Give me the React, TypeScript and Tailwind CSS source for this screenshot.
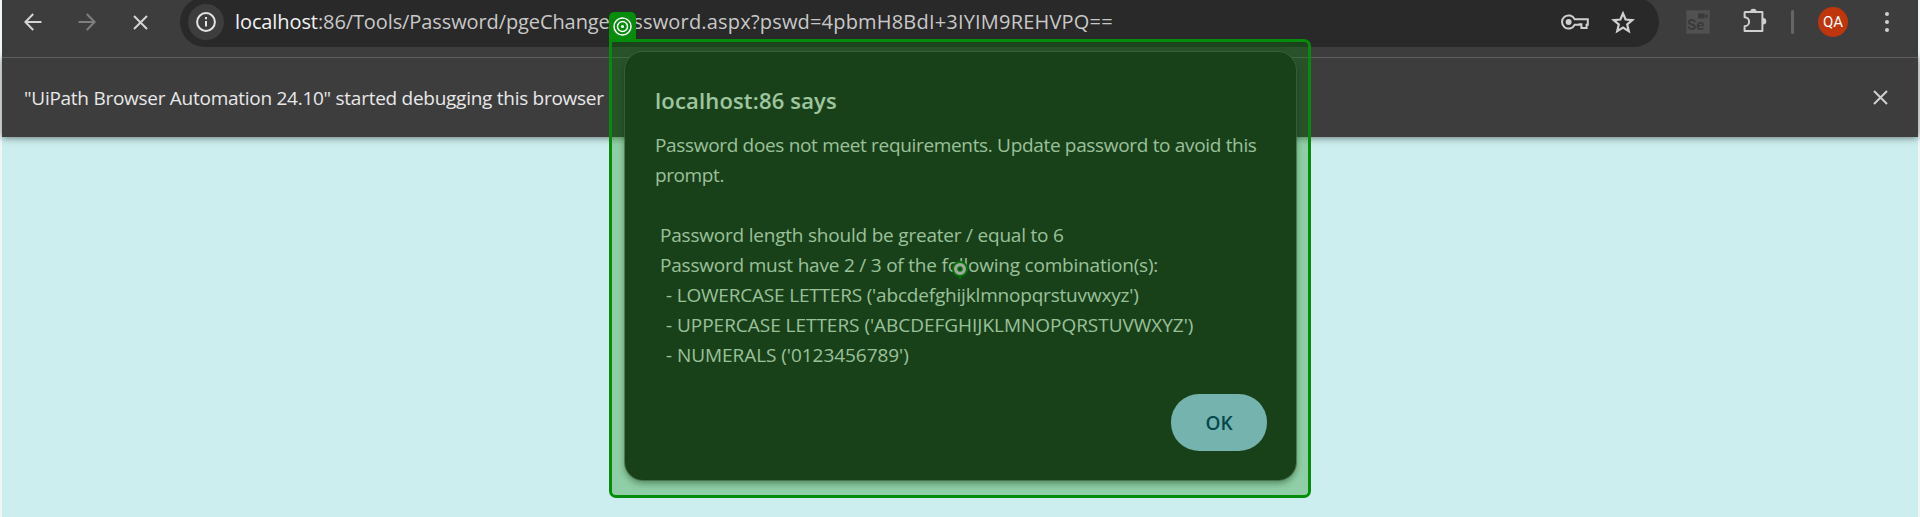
import React from "react";

function BackIcon() {
  return (
    <svg width="18" height="18" viewBox="0 0 18 18" fill="none" stroke="currentColor" strokeWidth="2">
      <path d="M17.5 9H2M9.2 1L1.4 9l7.8 8" />
    </svg>
  );
}

function ForwardIcon() {
  return (
    <svg width="18" height="18" viewBox="0 0 18 18" fill="none" stroke="currentColor" strokeWidth="2">
      <path d="M0.5 9H16M8.8 1l7.8 8-7.8 8" />
    </svg>
  );
}

function CrossIcon() {
  return (
    <svg width="15" height="15" viewBox="0 0 15 15" fill="none" stroke="currentColor" strokeWidth="2">
      <path d="M1 1l13 13M14 1L1 14" />
    </svg>
  );
}

function InfoIcon() {
  return (
    <svg width="20" height="20" viewBox="0 0 20 20" fill="none" stroke="currentColor" strokeWidth="2">
      <circle cx="10" cy="10" r="8.9" />
      <path d="M10 9v5.6M10 5v2.2" />
    </svg>
  );
}

function KeyIcon() {
  return (
    <svg width="28" height="16" viewBox="0 0 28 16" fill="none" stroke="currentColor" strokeWidth="2">
      <path d="M13.6 5.2H26.8v5.6h-1.2V14h-5.2v-3.8h-1.8v.6h-5A6.6 6.6 0 1 1 13.6 5.2z" />
      <circle cx="7.6" cy="8" r="3" fill="currentColor" stroke="none" />
    </svg>
  );
}

function StarIcon() {
  return (
    <svg width="24" height="23" viewBox="0 0 24 23" fill="none" stroke="currentColor" strokeWidth="2.2">
      <path d="M12 2.4l2.6 6.1 6.7.6-5.1 4.4 1.6 6.6L12 16.6l-5.8 3.5 1.6-6.6-5.1-4.4 6.7-.6z" />
    </svg>
  );
}

function PuzzleIcon() {
  return (
    <svg width="25" height="25" viewBox="0 0 25 25">
      <path
        d="M3.2 4H20.4V23H2.6V18.2A3.6 3.6 0 0 0 2.6 9.2V4.6Q2.6 4 3.2 4z"
        fill="none"
        stroke="currentColor"
        strokeWidth="2"
        strokeLinejoin="round"
      />
      <path d="M8.2 4a3.2 3.2 0 0 1 6.4 0zM21 10a3.3 3.3 0 0 1 0 6.6z" fill="currentColor" />
    </svg>
  );
}

function SeleniumBadge() {
  return (
    <div className="relative flex h-6 w-6 items-end bg-[#515151] pl-px ring-1 ring-[#4a4a4a] ring-inset">
      <span className="font-['Roboto',sans-serif] text-[15px] leading-[17px] font-bold text-[#3a3a3a]">Se</span>
      <svg className="absolute top-[3px] right-[2px]" width="10" height="6" viewBox="0 0 10 6" fill="#3a3a3a">
        <path d="M0 .5h6.6v5H0zM7 2.5L9.6.5v5L7 3.5z" />
      </svg>
    </div>
  );
}

function Toolbar() {
  return (
    <header className="relative z-10 flex h-[57px] items-start bg-[#3d3d3d]">
      <div className="flex h-11 w-[178px] shrink-0 items-center pl-[22px] text-[#d4d4d4]">
        <BackIcon />
        <span className="ml-9 text-[#7f7f7f]">
          <ForwardIcon />
        </span>
        <span className="ml-[37px]">
          <CrossIcon />
        </span>
      </div>
      <div className="-mt-[3px] flex h-[50px] w-[1479px] shrink-0 items-center rounded-full bg-[#292929] pr-6 pl-2 text-[#d0d0d0]">
        <span className="flex h-9 w-9 items-center justify-center rounded-full bg-[#3d3d3d] text-[#e3e3e3]">
          <InfoIcon />
        </span>
        <p className="ml-[11px] grow text-[20px] leading-[28px] whitespace-pre text-[#c8c8c8]">
          <span className="tracking-[-0.1px] text-[#f2f2f2]">localhost</span>
          <span className="tracking-[-0.1px]">:86/Tools/Password/pgeChange</span>
          <span className="tracking-[0.19px]">Password.aspx?pswd=4pbmH8BdI+3IYIM9REHVPQ==</span>
        </p>
        <KeyIcon />
        <span className="ml-[22px]">
          <StarIcon />
        </span>
      </div>
      <div className="flex h-11 grow items-center pl-[27px] text-[#d0d0d0]">
        <SeleniumBadge />
        <span className="-mt-1 ml-8">
          <PuzzleIcon />
        </span>
        <span className="ml-6 h-6 w-[3px] rounded-full bg-[#666666]" />
        <span className="ml-6 flex h-[30px] w-[30px] items-center justify-center rounded-full bg-[#bf360c] font-['Roboto',sans-serif] text-[15px] text-white">
          QA
        </span>
        <span className="ml-[37px] flex flex-col gap-1">
          <i className="h-1 w-1 rounded-full bg-current" />
          <i className="h-1 w-1 rounded-full bg-current" />
          <i className="h-1 w-1 rounded-full bg-current" />
        </span>
      </div>
    </header>
  );
}

function InfoBar() {
  return (
    <div className="relative flex h-20 items-center justify-between border-t border-[#606060] bg-[#3d3d3d] pr-[30px] pl-[22px] text-[#e8e8e8] shadow-[0_1px_7px_rgba(0,0,0,0.5)]">
      <span className="text-[19px] leading-[30px] tracking-[-0.27px] whitespace-pre">
        "UiPath Browser Automation 24.10" started debugging this browser
      </span>
      <span className="-mt-px text-[#d0d0d0]">
        <CrossIcon />
      </span>
    </div>
  );
}

function AlertDialog() {
  return (
    <section className="absolute top-[52px] left-[625px] flex h-[428px] w-[671px] flex-col rounded-[18px] bg-[#252525] pt-[33px] pr-[29px] pb-[29px] pl-[30px] text-[#dcdcdc] shadow-[0_0_0_1px_rgba(90,90,90,0.7),0_3px_7px_rgba(0,0,0,0.45)]">
      <h1 className="text-[22px] leading-[30px] font-semibold tracking-[0.17px] text-[#e3e3e3]">localhost:86 says</h1>
      <div className="mt-[15px] flex grow flex-col text-[19px] leading-[30px] whitespace-pre">
        <span className="tracking-[-0.33px]">Password does not meet requirements. Update password to avoid this</span>
        <span className="tracking-[-0.4px]">prompt.</span>
        <span className="mt-[30px] ml-[5px] tracking-[-0.21px]">Password length should be greater / equal to 6</span>
        <span className="ml-[5px] tracking-[-0.21px]">Password must have 2 / 3 of the following combination(s):</span>
        <span className="ml-[11px] tracking-[-0.19px]">- LOWERCASE LETTERS ('abcdefghijklmnopqrstuvwxyz')</span>
        <span className="ml-[11px] tracking-[-0.03px]">- UPPERCASE LETTERS ('ABCDEFGHIJKLMNOPQRSTUVWXYZ')</span>
        <span className="ml-[11px] tracking-[-0.05px]">- NUMERALS ('0123456789')</span>
      </div>
      <button className="h-[57px] w-24 self-end rounded-[28px] bg-[#a8c7fa] pt-0.5 text-[19px] font-semibold text-[#062e6f]">
        OK
      </button>
    </section>
  );
}

function TargetHighlight() {
  return (
    <>
      <div className="absolute top-[39px] left-[609px] h-[459px] w-[702px] rounded-[7px] rounded-tl-none border-[3px] border-[#058c0b] bg-[rgba(0,134,0,0.3)] bg-clip-padding" />
      <div className="absolute top-3 left-[609px] flex h-[28px] w-[27px] items-center justify-center rounded-t-[5px] bg-[#058c0b]">
        <svg width="19" height="19" viewBox="0 0 19 19" fill="none" stroke="#fff" strokeWidth="1.5">
          <circle cx="9.5" cy="9.5" r="8.5" />
          <circle cx="9.5" cy="9.5" r="5" />
          <circle cx="9.5" cy="9.5" r="1.5" fill="#fff" stroke="none" />
        </svg>
      </div>
      <svg className="absolute top-[260px] left-[951px]" width="18" height="20" viewBox="0 0 18 20">
        <path d="M9 1v18" stroke="#067006" strokeWidth="2" />
        <circle cx="9" cy="9" r="7" fill="#9fa99f" stroke="#067006" strokeWidth="2" />
        <circle cx="9" cy="9" r="2" fill="#1a411a" stroke="#067006" strokeWidth="1.5" />
      </svg>
    </>
  );
}

export default function App() {
  return (
    <div className="relative h-[517px] w-[1920px] overflow-hidden bg-[#eef6f6] px-[2px] font-['Open_Sans','Noto_Sans',sans-serif]">
      <div className="isolate flex h-full flex-col bg-[#cdeeee]">
        <Toolbar />
        <InfoBar />
      </div>
      <AlertDialog />
      <TargetHighlight />
    </div>
  );
}
